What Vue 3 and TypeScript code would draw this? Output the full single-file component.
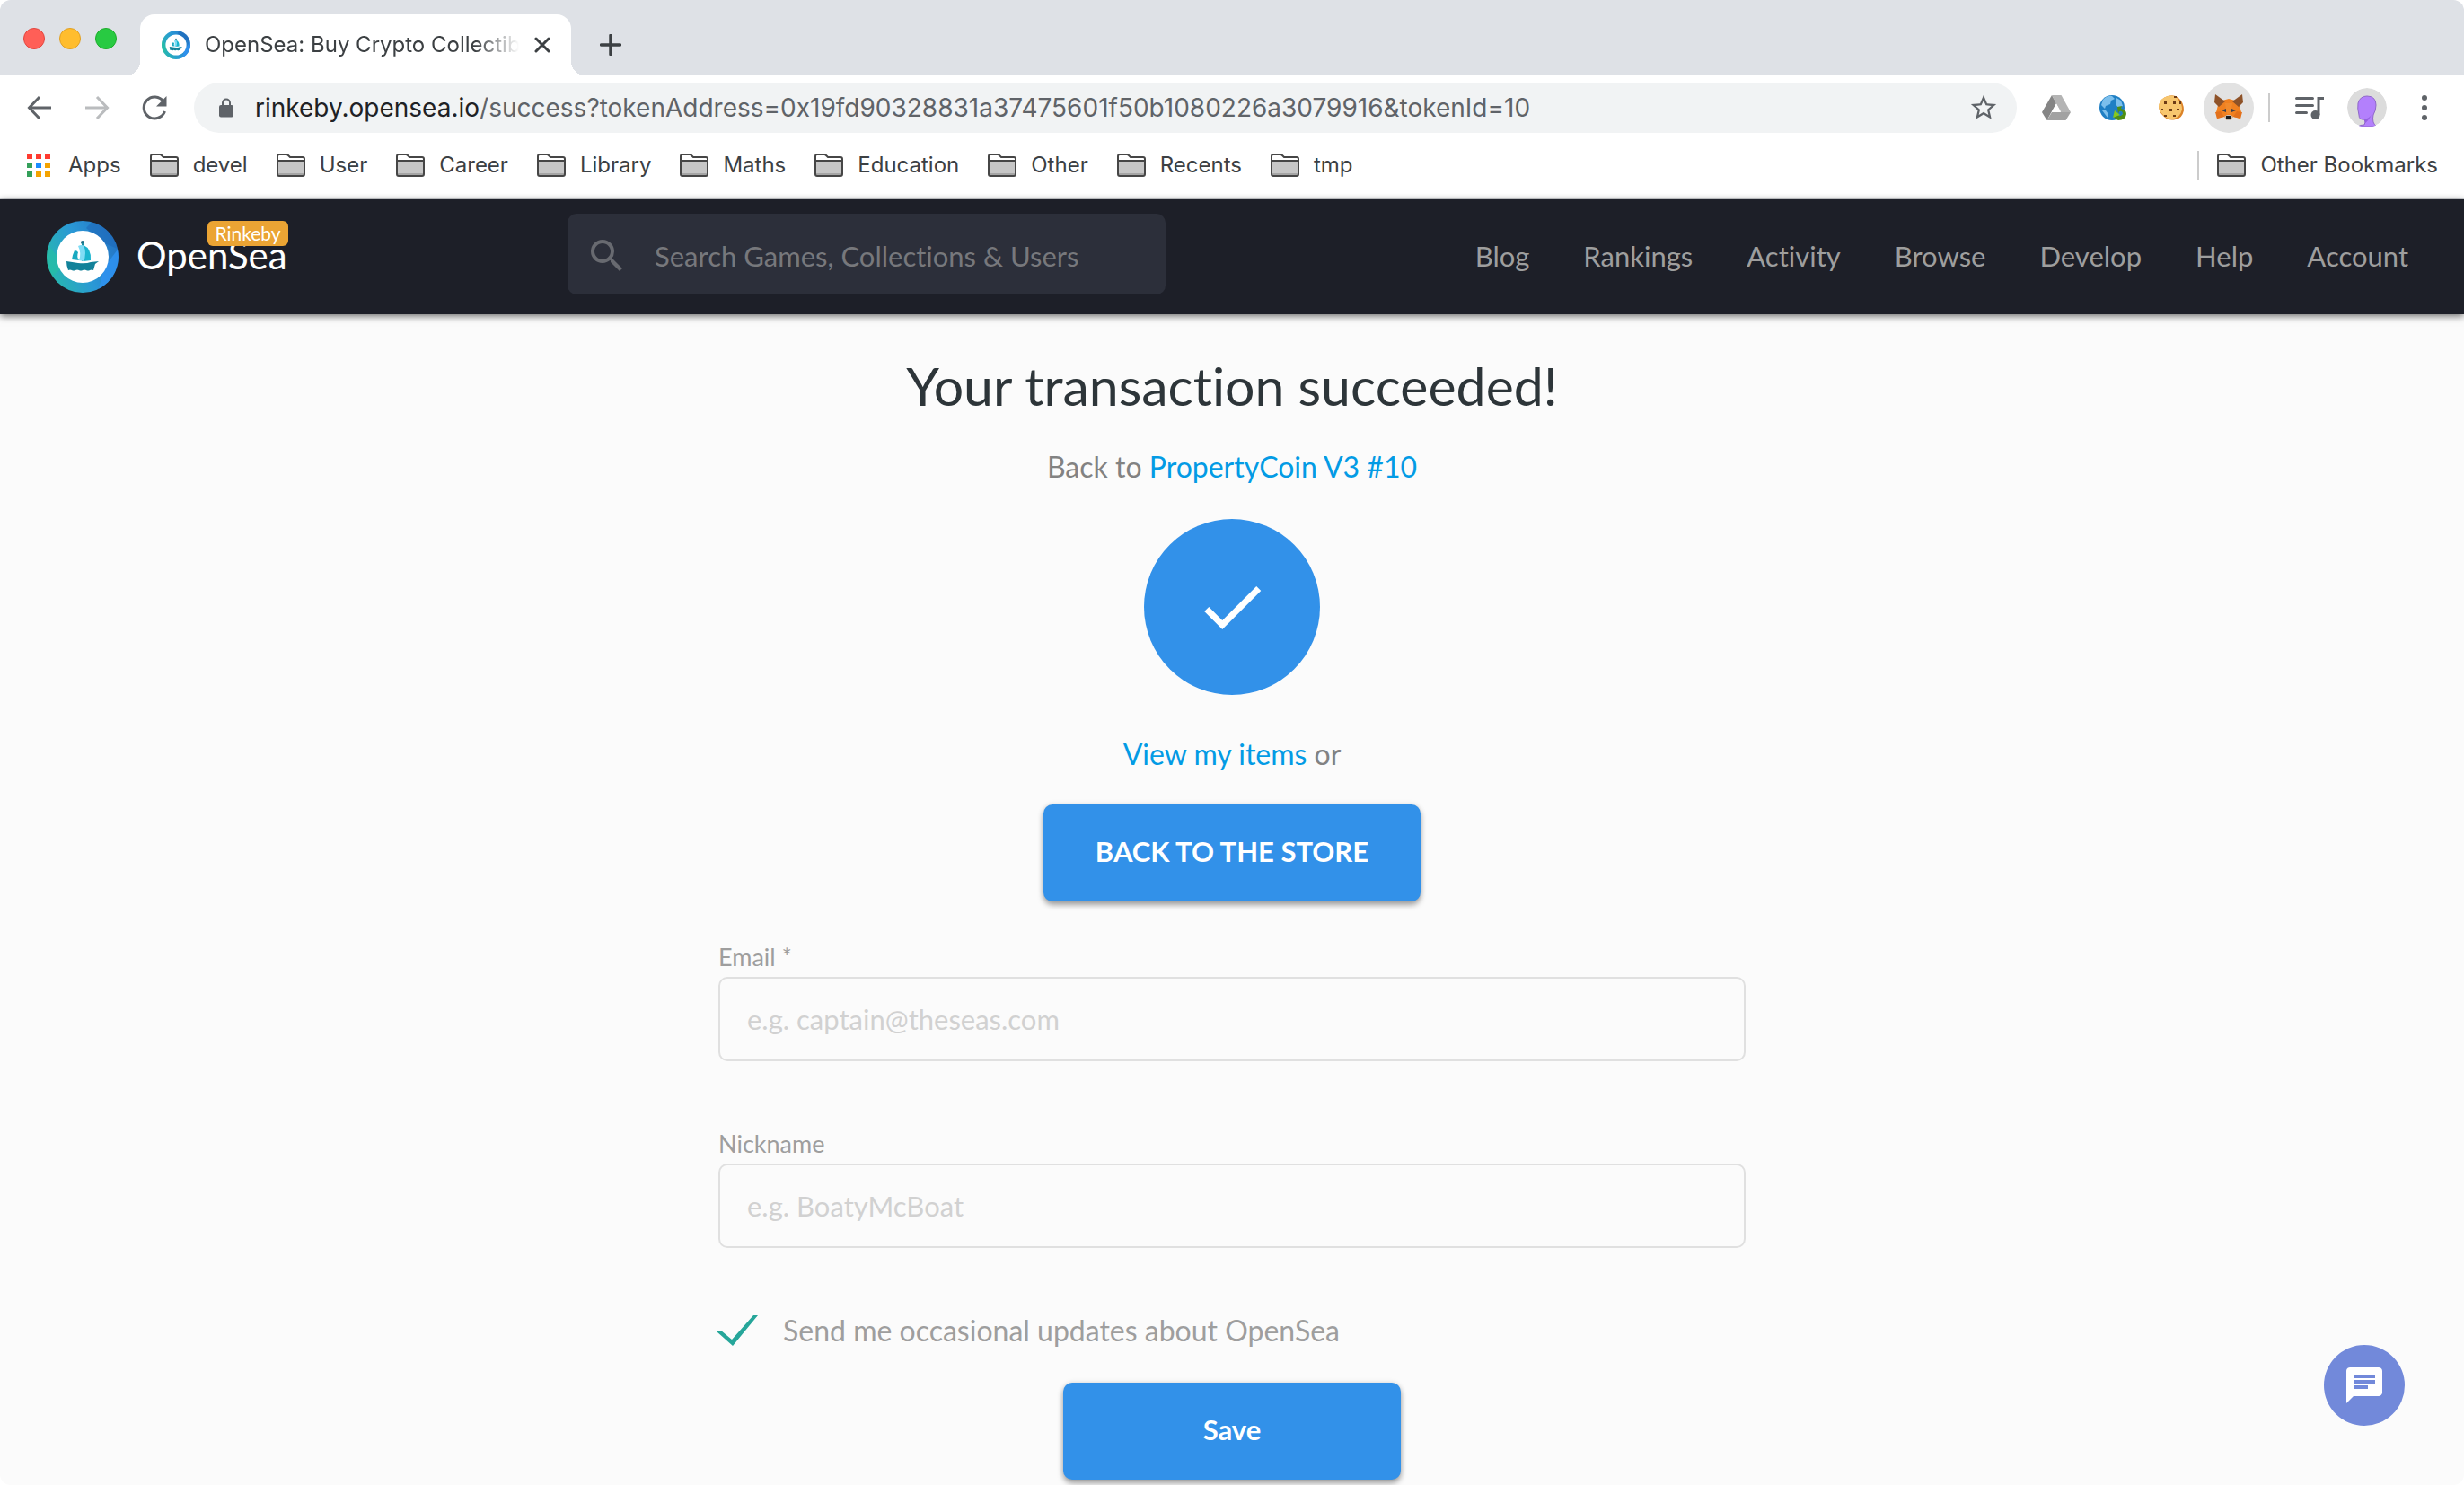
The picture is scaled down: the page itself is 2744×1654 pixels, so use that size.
<script setup lang="ts">
import { ref } from 'vue'

const folders: string[] = ['devel', 'User', 'Career', 'Library', 'Maths', 'Education', 'Other', 'Recents', 'tmp']
const navLinks: string[] = ['Blog', 'Rankings', 'Activity', 'Browse', 'Develop', 'Help', 'Account']
const appDots: string[] = ['#ff3b30', '#ff3b30', '#ff3b30', '#34a05a', '#1a8cff', '#f4a300', '#34a05a', '#f4a300', '#f4a300']

const search = ref('')
const email = ref('')
const nickname = ref('')
const updates = ref(true)
</script>

<template>
  <div class="window">
    <svg class="defs" width="0" height="0" aria-hidden="true">
      <defs>
        <linearGradient id="ring" x1="0" y1="0.7" x2="1" y2="0.3">
          <stop offset="0" stop-color="#27b9ad" />
          <stop offset="0.5" stop-color="#2a98d6" />
          <stop offset="1" stop-color="#2473c4" />
        </linearGradient>
        <symbol id="opensea" viewBox="0 0 80 80">
          <circle cx="40" cy="40" r="40" fill="url(#ring)" />
          <path d="M50 1.300A40 40 0 0 1 79 31L62 24 44 8z" fill="#1e68b8" opacity=".55" />
          <path d="M79 32A40 40 0 0 1 58 75.700L64 52z" fill="#2f92f2" opacity=".8" />
          <path d="M2 28A40 40 0 0 0 6 61L16 54 11 38z" fill="#26c0a4" opacity=".6" />
          <circle cx="40" cy="40" r="29" fill="#fff" />
          <circle cx="40" cy="24" r="2" fill="#1b6f86" />
          <path d="M39 25h2v20h-2z" fill="#1b8ca0" />
          <path d="M31 33q3 0 4 2-2 5 1 9l-8-1q1-6 3-10z" fill="#19a9c0" />
          <path d="M35 28q4-2 7 0 4 8-1 17l-5-1q3-8-1-16z" fill="#7fdcf5" />
          <path d="M41 27q9 4 8 17l-8 1q4-9 0-18z" fill="#1bb5cf" />
          <path d="M22 45l13 2q9 1 14-1l9-1-4 3-2 7q-2-1-4 0t-4 0-4 0-4 0-4 0-4 0-4 0q-2-5-2-10z" fill="#12829a" />
        </symbol>
        <symbol id="folder" viewBox="0 0 32 26">
          <path d="M1 23V3q0-2 2-2h8q1 0 2 1l2 2h14q2 0 2 2v17q0 2-2 2H3q-2 0-2-2z" fill="#fff" />
          <path d="M1 9h30v14H1z" fill="#c6c6c6" />
          <path d="M2 22h28v2H2z" fill="#a5a5a5" />
          <path d="M1 23V3q0-2 2-2h8q1 0 2 1l2 2h14q2 0 2 2v17q0 2-2 2H3q-2 0-2-2zM1 8h30" fill="none" stroke="#464646" stroke-width="2" />
        </symbol>
      </defs>
    </svg>

    <div class="tabstrip">
      <div class="lights">
        <button type="button" class="light red" aria-label="Close window"></button>
        <button type="button" class="light amber" aria-label="Minimise window"></button>
        <button type="button" class="light green" aria-label="Zoom window"></button>
      </div>
      <div class="tab">
        <svg class="favicon" aria-hidden="true"><use href="#opensea" /></svg>
        <span class="tab-title">OpenSea: Buy Crypto Collectibles</span>
        <button type="button" class="plain tab-close" aria-label="Close tab">
          <svg width="18" height="18" viewBox="0 0 18 18"><path d="M2 2l14 14M16 2L2 16" stroke="#3c4043" stroke-width="3" stroke-linecap="round" /></svg>
        </button>
      </div>
      <button type="button" class="plain new-tab" aria-label="New tab">
        <svg width="24" height="24" viewBox="0 0 24 24"><path d="M12 1.500v21M1.500 12h21" stroke="#3c4043" stroke-width="3.500" stroke-linecap="round" /></svg>
      </button>
    </div>

    <div class="toolbar">
      <button type="button" class="plain cell" aria-label="Back">
        <svg width="28" height="28" viewBox="0 0 28 28" fill="none" stroke="#5f6368" stroke-width="3"><path d="M27 14H3M14 2L2.500 14 14 26" /></svg>
      </button>
      <button type="button" class="plain cell" aria-label="Forward">
        <svg width="28" height="28" viewBox="0 0 28 28" fill="none" stroke="#babcbe" stroke-width="3"><path d="M1 14h24M14 2l11.500 12L14 26" /></svg>
      </button>
      <button type="button" class="plain cell" aria-label="Reload">
        <svg width="28" height="28" viewBox="0 0 28 28"><path d="M24 7A12 12 0 1 0 25.500 18" fill="none" stroke="#5f6368" stroke-width="3" /><path d="M27.500 1v11.500H16z" fill="#5f6368" /></svg>
      </button>
      <div class="omnibox">
        <svg width="16" height="22" viewBox="0 0 16 22" aria-hidden="true"><path d="M4 9V5.500a4 4 0 0 1 8 0V9" fill="none" stroke="#5f6368" stroke-width="2" /><rect y="8" width="16" height="13.500" rx="2" fill="#5f6368" /></svg>
        <span class="url"><span class="host">rinkeby.opensea.io</span>/success?tokenAddress=0x19fd90328831a37475601f50b1080226a3079916&amp;tokenId=10</span>
        <button type="button" class="plain" aria-label="Bookmark this page">
          <svg width="34" height="34" viewBox="0 0 24 24"><path d="M22 9.240l-7.190-.62L12 2 9.190 8.630 2 9.240l5.460 4.730L5.820 21 12 17.270 18.180 21l-1.630-7.030L22 9.240zM12 15.400l-3.760 2.270 1-4.280-3.320-2.880 4.380-.38L12 6.100l1.710 4.040 4.380.38-3.320 2.880 1 4.280L12 15.400z" fill="#5f6368" /></svg>
        </button>
      </div>
      <button type="button" class="plain cell" aria-label="Drive">
        <svg width="32" height="28" viewBox="0 0 32 28"><path d="M11 0L0 19l5.500 9L16 9z" fill="#858585" /><path d="M11 0h10.500L32 19H21z" fill="#b4b4b4" /><path d="M5.500 28L11 19h21l-5.500 9z" fill="#a2a2a2" /><path d="M16 9.500l5 9H11z" fill="#fff" /></svg>
      </button>
      <button type="button" class="plain cell" aria-label="Web proxy">
        <svg width="32" height="28" viewBox="0 0 32 28"><circle cx="14" cy="14" r="14" fill="#1f7fc4" /><path d="M4 5Q9 0 14 1l3 3-4 2-1 4-5 2-1 3-4-4zM3 17l4 0 3 4-1 4zM19 3l5 3 2 6-5 2-3-4z" fill="#7cbfec" /><path d="M20 13l5-1-1 3q6 1 6 6-1 7-9 7-4-1-5-5l4-1q3 3 6-1 0-4-4-3l-1 3z" fill="#4f8f14" /><path d="M15 25l2-8 6 5z" fill="#86c81e" /></svg>
      </button>
      <button type="button" class="plain cell" aria-label="Cookies">
        <svg width="28" height="28" viewBox="0 0 28 28"><path d="M10 1q8-2 12 2 6 5 6 14-2 9-9 10-8 2-13-3-6-5-6-12Q2 3 10 1z" fill="#dc8328" /><path d="M10 1q8-2 11 3 5 5 5 12-2 8-9 10-7 1-11-3-6-5-6-12Q2 3 10 1z" fill="#f7c66e" /><path d="M6 7h3v3H6zM16 6h3v4h-3zM11 15h4v3h-4zM3 15h2v2H3zM20 15h3v2h-3zM6 22h3v2H6zM16 22h3v2h-3zM17 1h3v2h-3zM23 7h2v3h-2z" fill="#6d3b15" /></svg>
      </button>
      <button type="button" class="plain cell" aria-label="MetaMask">
        <span class="fox">
          <svg width="32" height="30" viewBox="0 0 32 30"><path d="M5 8L16 5l11 3 3 12-1 7-8-2-3 4h-4l-3-4-8 2-1-7z" fill="#f08020" /><path d="M1 20l6-1 4 6-8 2zM31 20l-6-1-4 6 8 2z" fill="#e2701b" /><path d="M0 9l1-9 11 8-7 6zM32 9l-1-9-11 8 7 6z" fill="#8e5228" /><path d="M8 18l5-2 0 4zM24 18l-5-2 0 4z" fill="#3a3f4c" /><path d="M12 10h8l-2 12h-4z" fill="#f28a2c" /><path d="M11 25l3-2h4l3 2-3 4h-4z" fill="#c8bdb2" /><path d="M13 24h6v3h-6z" fill="#1b1b1b" /></svg>
        </span>
      </button>
      <span class="divider"></span>
      <button type="button" class="plain cell" aria-label="Media controls">
        <svg width="32" height="26" viewBox="0 0 32 26"><path d="M1.500 2.500h18M1.500 10.500h18M1.500 18.500h11" stroke="#5f6368" stroke-width="3" stroke-linecap="round" /><path d="M26 21V2.500h6" fill="none" stroke="#5f6368" stroke-width="3" /><circle cx="22.500" cy="21" r="5" fill="#5f6368" /></svg>
      </button>
      <button type="button" class="plain cell" aria-label="Profile">
        <svg width="44" height="44" viewBox="0 0 44 44"><clipPath id="face"><circle cx="22" cy="22" r="22" /></clipPath><g clip-path="url(#face)"><circle cx="22" cy="22" r="22" fill="#dcdcdc" /><path d="M22 9q10 0 10 10 0 6-3 11-1 4 0 8 1 3 4 5H12q2-2 7-2 2-3 0-6-6 1-6-5-2-7-1-13 2-8 10-8z" fill="#b380fc" stroke="#8f68c8" /><path d="M19 35q5-1 8-5-4 7-7 9z" fill="#9560e0" /></g></svg>
      </button>
      <button type="button" class="plain cell" aria-label="Menu">
        <svg width="6" height="28" viewBox="0 0 6 28" fill="#5f6368"><circle cx="3" cy="3" r="3" /><circle cx="3" cy="14" r="3" /><circle cx="3" cy="25" r="3" /></svg>
      </button>
    </div>

    <nav class="bookmarks" aria-label="Bookmarks">
      <a href="#" class="bookmark apps">
        <svg width="26" height="26" viewBox="0 0 26 26" aria-hidden="true">
          <rect v-for="(color, i) in appDots" :key="i" :x="(i % 3) * 10" :y="Math.floor(i / 3) * 10" width="6" height="6" :fill="color" />
        </svg>
        <span>Apps</span>
      </a>
      <a v-for="name in folders" :key="name" href="#" class="bookmark">
        <svg class="folder" aria-hidden="true"><use href="#folder" /></svg>
        <span>{{ name }}</span>
      </a>
      <span class="divider other-divider"></span>
      <a href="#" class="bookmark">
        <svg class="folder" aria-hidden="true"><use href="#folder" /></svg>
        <span>Other Bookmarks</span>
      </a>
    </nav>

    <header class="site-header">
      <a href="#" class="brand">
        <svg class="brand-logo" aria-hidden="true"><use href="#opensea" /></svg>
        <span class="brand-name">OpenSea<span class="badge">Rinkeby</span></span>
      </a>
      <label class="search">
        <svg width="48" height="48" viewBox="0 0 24 24" aria-label="Search"><path d="M15.500 14h-.79l-.28-.27A6.470 6.470 0 0 0 16 9.500 6.500 6.500 0 1 0 9.500 16c1.610 0 3.090-.59 4.230-1.570l.27.28v.79l5 4.990L20.490 19l-4.990-5zm-6 0C7.010 14 5 11.990 5 9.500S7.010 5 9.500 5 14 7.010 14 9.500 11.990 14 9.500 14z" fill="#686a70" /></svg>
        <input v-model="search" type="text" placeholder="Search Games, Collections &amp; Users" />
      </label>
      <nav class="site-nav" aria-label="Site">
        <a v-for="link in navLinks" :key="link" href="#">{{ link }}</a>
      </nav>
    </header>

    <main class="content">
      <h1>Your transaction succeeded!</h1>
      <p class="line back">Back to <a href="#">PropertyCoin V3 #10</a></p>
      <div class="success">
        <svg width="86" height="86" viewBox="0 0 24 24" aria-label="Success"><path d="M9 16.170L4.830 12l-1.420 1.410L9 19 21 7l-1.410-1.410z" fill="#fff" /></svg>
      </div>
      <p class="line"><a href="#">View my items</a> or</p>
      <button type="button" class="primary store">BACK TO THE STORE</button>

      <form class="form" @submit.prevent>
        <div class="field">
          <label for="email">Email *</label>
          <input id="email" v-model="email" type="email" placeholder="e.g. captain@theseas.com" />
        </div>
        <div class="field">
          <label for="nickname">Nickname</label>
          <input id="nickname" v-model="nickname" type="text" placeholder="e.g. BoatyMcBoat" />
        </div>
        <label class="updates">
          <input v-model="updates" type="checkbox" />
          <span>Send me occasional updates about OpenSea</span>
        </label>
        <button type="submit" class="primary save">Save</button>
      </form>
    </main>

    <button type="button" class="chat" aria-label="Open chat">
      <svg width="48" height="48" viewBox="0 0 24 24"><path d="M20 2H4c-1.100 0-1.990.9-1.990 2L2 22l4-4h14c1.100 0 2-.9 2-2V4c0-1.100-.9-2-2-2zM6 9h12v2H6V9zm8 5H6v-2h8v2zm4-6H6V6h12v2z" fill="#fff" /></svg>
    </button>
  </div>
</template>

<style>
body {
  margin: 0;
  background: #fff;
}
</style>

<style scoped>
.window {
  position: relative;
  display: flex;
  flex-direction: column;
  min-height: 100vh;
  border-radius: 12px;
  overflow: hidden;
  background: #fbfbfb;
  font-family: Lato, "Noto Sans", sans-serif;
}
.window *,
.window *::before {
  box-sizing: border-box;
  font-variant-ligatures: none;
}
.defs {
  position: absolute;
}
a {
  text-decoration: none;
}
.plain {
  display: flex;
  align-items: center;
  justify-content: center;
  padding: 0;
  border: 0;
  background: none;
}

.tabstrip,
.toolbar,
.bookmarks {
  font-family: Inter, Roboto, sans-serif;
}
.tabstrip {
  display: flex;
  align-items: flex-end;
  height: 84px;
  background: #dee1e6;
}
.lights {
  display: flex;
  align-self: center;
  gap: 16px;
  padding: 2px 26px 0;
}
.light {
  width: 24px;
  height: 24px;
  padding: 0;
  border: 1px solid;
  border-radius: 50%;
}
.red {
  background: #ff5f57;
  border-color: #e2463f;
}
.amber {
  background: #ffbd2e;
  border-color: #e0a024;
}
.green {
  background: #28ca42;
  border-color: #1dad2b;
}
.tab {
  position: relative;
  display: flex;
  align-items: center;
  width: 480px;
  height: 68px;
  padding: 0 22px 0 24px;
  border-radius: 16px 16px 0 0;
  background: #fff;
}
.tab::before,
.tab::after {
  content: "";
  position: absolute;
  bottom: 0;
  width: 16px;
  height: 16px;
}
.tab::before {
  right: 100%;
  background: radial-gradient(circle at 0 0, transparent 16px, #fff 16px);
}
.tab::after {
  left: 100%;
  background: radial-gradient(circle at 100% 0, transparent 16px, #fff 16px);
}
.favicon {
  flex: none;
  width: 32px;
  height: 32px;
}
.tab-title {
  flex: 1;
  margin: 0 16px;
  overflow: hidden;
  white-space: nowrap;
  font-size: 24px;
  line-height: 32px;
  color: #3c4043;
  mask-image: linear-gradient(to right, #000 86%, transparent);
}
.tab-close {
  width: 20px;
  height: 32px;
}
.new-tab {
  width: 56px;
  height: 68px;
  margin-left: 16px;
}

.toolbar {
  display: flex;
  align-items: center;
  height: 72px;
  padding: 0 12px;
  background: #fff;
}
.cell {
  flex: none;
  width: 64px;
  height: 56px;
}
.omnibox {
  flex: 1;
  display: flex;
  align-items: center;
  height: 56px;
  margin: 0 12px;
  padding: 0 20px 0 28px;
  border-radius: 28px;
  background: #f1f3f4;
}
.url {
  flex: 1;
  margin-left: 24px;
  font-size: 28px;
  line-height: 36px;
  white-space: nowrap;
  color: #5f6368;
}
.host {
  color: #202124;
}
.fox {
  display: flex;
  align-items: center;
  justify-content: center;
  width: 56px;
  height: 56px;
  border-radius: 50%;
  background: #e2e2e2;
}
.divider {
  flex: none;
  width: 2px;
  height: 32px;
  margin: 0 12px;
  background: #ccc;
}

.bookmarks {
  display: flex;
  align-items: center;
  gap: 32px;
  height: 66px;
  padding: 0 29px 8px 30px;
  border-bottom: 2px solid #dadce0;
  background: #fff;
}
.bookmark {
  display: flex;
  align-items: center;
  gap: 16px;
  font-size: 24px;
  line-height: 32px;
  color: #3c4043;
}
.apps {
  gap: 20px;
}
.folder {
  width: 32px;
  height: 26px;
}
.other-divider {
  margin: 0 -12px 0 auto;
}

.site-header {
  position: relative;
  display: flex;
  align-items: center;
  height: 128px;
  padding: 0 62px 0 52px;
  background: #1d1f28;
  box-shadow: 0 2px 8px rgba(0, 0, 0, 0.6);
}
.brand {
  display: flex;
  align-items: center;
  gap: 20px;
  width: 580px;
}
.brand-logo {
  width: 80px;
  height: 80px;
}
.brand-name {
  position: relative;
  padding-bottom: 4px;
  font-size: 42px;
  line-height: 56px;
  color: #fff;
}
.badge {
  position: absolute;
  top: -10px;
  right: -1px;
  padding: 0 8px;
  border-radius: 6px;
  background: #eba434;
  font-size: 21px;
  line-height: 28px;
}
.search {
  display: flex;
  align-items: center;
  width: 666px;
  height: 90px;
  margin-bottom: 6px;
  padding: 4px 20px 0;
  border-radius: 10px;
  background: #2c2f3a;
}
.search input {
  flex: 1;
  margin-left: 29px;
  padding: 0;
  border: 0;
  outline: 0;
  background: none;
  font-family: inherit;
  font-size: 31px;
  line-height: 40px;
  color: #fff;
}
.search input::placeholder {
  color: #77787c;
}
.site-nav {
  display: flex;
  gap: 60px;
  margin-left: auto;
  padding-bottom: 2px;
}
.site-nav a {
  font-size: 31px;
  line-height: 40px;
  color: #9e9e9e;
}

.content {
  flex: 1;
  display: flex;
  flex-direction: column;
  align-items: center;
  padding: 42px 0 6px;
}
h1 {
  margin: 0;
  font-size: 59px;
  font-weight: 400;
  line-height: 76px;
  color: #2d3539;
}
.line {
  margin: 0;
  font-size: 32px;
  line-height: 48px;
  color: #828282;
}
.line a {
  color: #039be5;
}
.back {
  margin-top: 28px;
}
.success {
  display: flex;
  align-items: center;
  justify-content: center;
  width: 196px;
  height: 196px;
  margin: 34px 0 42px;
  border-radius: 50%;
  background: #3291e9;
}
.primary {
  height: 108px;
  padding-bottom: 6px;
  border: 0;
  border-radius: 10px;
  background: #3291e9;
  box-shadow: 0 4px 6px rgba(0, 0, 0, 0.35), 0 0 6px rgba(0, 0, 0, 0.1);
  font-family: inherit;
  font-size: 31px;
  font-weight: 700;
  color: #fff;
}
.store {
  width: 420px;
  margin-top: 32px;
}
.form {
  display: flex;
  flex-direction: column;
  width: 1144px;
  max-width: 90%;
  margin-top: 44px;
}
.field {
  display: flex;
  flex-direction: column;
  gap: 4px;
  margin-bottom: 74px;
}
.field label {
  font-size: 27px;
  line-height: 36px;
  color: #9e9e9e;
}
.field input {
  height: 94px;
  padding: 0 30px;
  border: 2px solid #e0e0e0;
  border-radius: 10px;
  outline: 0;
  background: none;
  font-family: inherit;
  font-size: 31px;
  line-height: 40px;
  color: #2d3539;
}
.field input::placeholder {
  color: #d1d1d1;
}
.updates {
  display: flex;
  align-items: center;
  gap: 28px;
  font-size: 32px;
  line-height: 36px;
  color: #9e9e9e;
}
.updates input {
  appearance: none;
  width: 46px;
  height: 34px;
  margin: 0 0 0 -2px;
}
.updates input:checked::before {
  content: "";
  display: block;
  width: 46px;
  height: 34px;
  background: #26a69a;
  clip-path: polygon(0 18px, 5px 17px, 17px 27px, 41px 0, 46px 0, 18px 34px);
}
.save {
  align-self: center;
  width: 376px;
  margin-top: 40px;
}
.chat {
  position: absolute;
  right: 66px;
  bottom: 66px;
  display: flex;
  align-items: center;
  justify-content: center;
  width: 90px;
  height: 90px;
  padding: 0;
  border: 0;
  border-radius: 50%;
  background: #7289da;
}
</style>
